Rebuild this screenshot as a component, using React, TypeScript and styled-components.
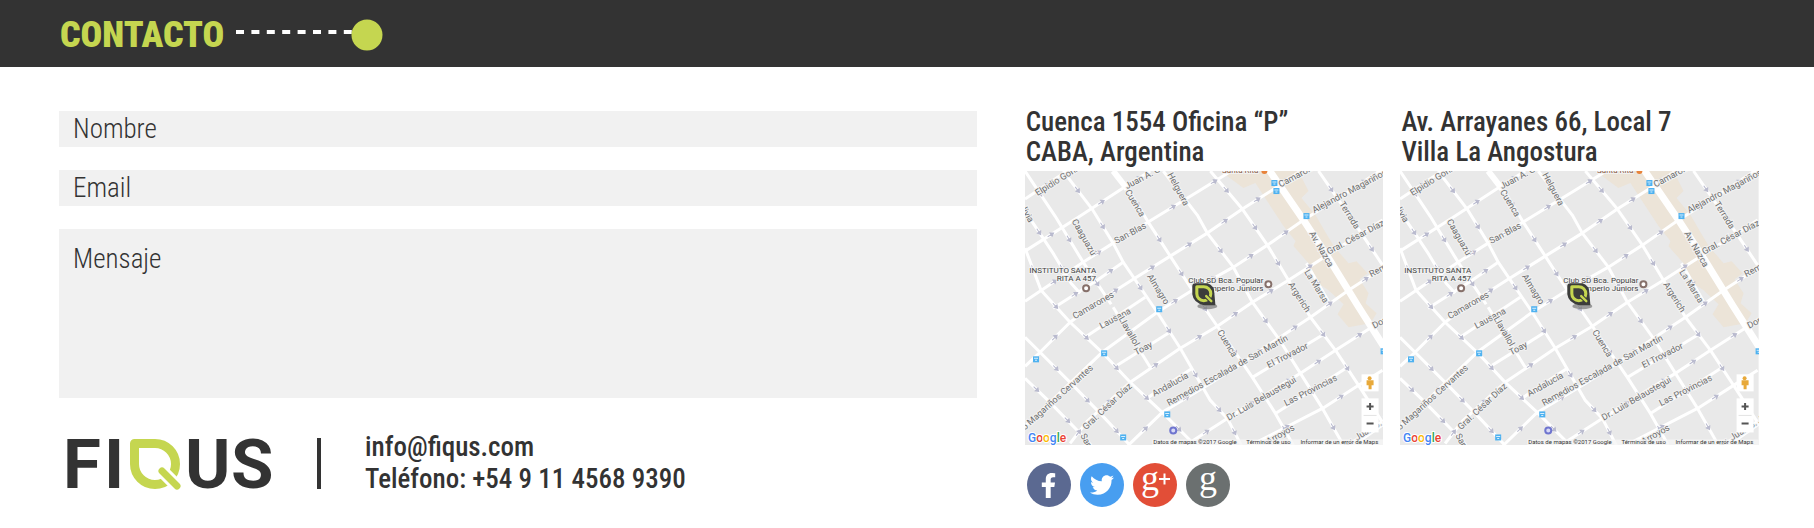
import React from 'react';
import styled, { createGlobalStyle } from 'styled-components';
import { FaFacebookF, FaTwitter } from 'react-icons/fa';

const ink = '#333333';
const lime = '#c5d650';
const field = '#f1f1f1';

const GlobalStyle = createGlobalStyle`
  *, *::before, *::after { box-sizing: border-box; }
  body {
    margin: 0;
    background: #fff;
    color: ${ink};
    font-family: 'Roboto Condensed', Roboto, sans-serif;
  }
`;

const Header = styled.header`
  display: flex;
  align-items: center;
  gap: 12px;
  height: 67px;
  padding: 2px 60px 0;
  background: ${ink};
`;

const Title = styled.h1`
  margin: 0;
  color: ${lime};
  font-size: 36px;
  font-weight: 900;
  line-height: 40px;
`;

const Trail = styled.svg`
  display: block;
  width: 148px;
  height: 32px;
`;

const Main = styled.main`
  display: grid;
  grid-template-columns: minmax(0, 5fr) minmax(0, 4fr);
  column-gap: 48px;
  padding: 40px 55px 20px 59px;
`;

const Form = styled.form`
  display: flex;
  flex-direction: column;
  gap: 23px;
  padding-top: 4px;
`;

const Input = styled.input`
  display: block;
  width: 100%;
  height: 36px;
  padding: 0 14px;
  border: 0;
  border-radius: 0;
  background: ${field};
  color: ${ink};
  font: 300 27px/32px 'Roboto Condensed', Roboto, sans-serif;
  &::placeholder { color: ${ink}; opacity: 1; }
`;

const Message = styled(Input).attrs({ as: 'textarea' })`
  height: 169px;
  padding: 14px;
  resize: none;
`;

const Brand = styled.div`
  display: flex;
  align-items: center;
  padding: 32px 0 0 6px;
`;

const Logo = styled.svg`
  display: block;
  width: 210px;
  height: 66px;
`;

const Divider = styled.span`
  width: 4px;
  height: 51px;
  margin: 0 44px 0 42px;
  background: ${ink};
`;

const Details = styled.address`
  font-size: 27px;
  font-style: normal;
  font-weight: 500;
  line-height: 32px;
`;

const PlainLink = styled.a`
  color: inherit;
  text-decoration: none;
`;

const Offices = styled.div`
  display: grid;
  grid-template-columns: repeat(2, minmax(0, 1fr));
  column-gap: 17px;
`;

const OfficeAddress = styled.address`
  padding: 0 0 4px 1px;
  font-size: 27px;
  font-style: normal;
  font-weight: 500;
  line-height: 30px;
  white-space: nowrap;
`;

const MapSvg = styled.svg`
  display: block;
  width: 100%;
  height: auto;
`;

const Social = styled.nav`
  display: flex;
  gap: 9px;
  padding: 18px 0 0 2px;
`;

const SocialLink = styled.a<{ $tone: string }>`
  display: flex;
  align-items: center;
  justify-content: center;
  width: 44px;
  height: 44px;
  border-radius: 50%;
  background: ${p => p.$tone};
  color: #fff;
`;

type Pt = [number, number];

const streets: Pt[][] = [
  [[0, 28], [42, 0]],
  [[0, 80], [52, 47], [101, 15], [125, 0]],
  [[0, 130], [58, 91], [88, 72], [123, 51], [172, 21], [206, 0]],
  [[28, 137], [72, 109], [98, 91]],
  [[0, 195], [15, 181], [45, 151], [72, 131], [108, 108], [145, 85], [182, 62], [217, 38], [247, 19], [275, 0]],
  [[60, 166], [120, 126]],
  [[0, 255], [77, 181], [132, 141], [167, 119], [208, 96], [242, 74], [278, 49], [318, 24], [357, -2]],
  [[45, 272], [62, 250], [105, 211], [155, 177], [192, 155], [227, 131], [263, 109], [305, 82], [357, 49]],
  [[92, 194], [143, 162]],
  [[103, 274], [137, 241], [185, 212], [215, 193], [253, 167], [285, 146], [323, 119], [357, 97]],
  [[123, 226], [167, 197]],
  [[227, 206], [300, 162]],
  [[160, 274], [202, 247], [250, 217], [275, 202], [310, 179], [357, 149]],
  [[250, 242], [322, 196]],
  [[225, 274], [297, 237], [333, 214], [357, 199]],
  [[0, 166], [15, 181], [47, 213], [77, 244], [105, 274]],
  [[0, 207], [23, 229], [62, 269], [66, 274]],
  [[0, 77], [16, 119], [45, 151], [77, 181], [105, 211], [137, 241], [170, 274]],
  [[0, 40], [28, 82], [46, 112], [55, 122]],
  [[0, 0], [30, 45], [58, 91], [86, 133]],
  [[38, 0], [67, 38], [88, 72], [98, 91], [132, 141], [155, 177], [185, 229], [202, 247], [216, 274]],
  [[88, 0], [101, 15], [123, 51], [145, 85], [167, 119], [192, 155], [227, 206], [250, 242], [268, 274]],
  [[138, 0], [172, 44], [182, 62], [208, 96], [227, 131], [253, 167], [275, 202], [297, 237], [318, 274]],
  [[185, 0], [217, 38], [242, 74], [263, 109], [285, 146], [310, 179], [333, 214], [357, 251]],
  [[293, 0], [318, 36], [335, 61], [357, 94]],
  [[281, 92], [304, 132]],
  [[88, 136], [125, 196]],
];

// One-way marks sit halfway along each block.
const arrows = streets.flatMap(line =>
  line.slice(1).flatMap((b, i) => {
    const a = line[i];
    const dx = b[0] - a[0];
    const dy = b[1] - a[1];
    if (Math.hypot(dx, dy) < 24) return [];
    return [{ x: (a[0] + b[0]) / 2, y: (a[1] + b[1]) / 2, r: (Math.atan2(dy, dx) * 180) / Math.PI }];
  }),
);

// Text, centre x, centre y, angle
const labels: [string, number, number, number][] = [
  ['Elpidio González', 39, 5, -32],
  ['Juan A. García', 126, 2, -28],
  ['Helguera', 153, 18, 62],
  ['Cuenca', 110, 32, 59],
  ['Caaguazú', 59, 66, 60],
  ['San Blas', 105, 62, -28],
  ['Almagro', 133, 118, 58],
  ['Camarones', 68, 134, -30],
  ['Lausana', 90, 147, -28],
  ['Llavallol', 104, 160, 60],
  ['Toay', 118, 177, -28],
  ['Andalucía', 145, 213, -29],
  ['Alejandro Magariños Cervantes', 20, 237, -42],
  ['Gral. César Díaz', 82, 235, -43],
  ['San Blas', 66, 278, 62],
  ['Remedios Escalada de San Martín', 202, 199, -29],
  ['El Trovador', 262, 184, -27],
  ['Dr. Luis Belaustegui', 236, 227, -30],
  ['Las Provincias', 285, 219, -27],
  ['Arroyos', 255, 263, -30],
  ['Av. Juan B. Justo', 347, 256, -32],
  ['Cuenca', 202, 172, 59],
  ['Camarones', 274, 3, -28],
  ['Alejandro Magariños', 324, 20, -28],
  ['Terrada', 324, 44, 58],
  ['Gral. César Díaz', 330, 66, -28],
  ['Av. Nazca', 296, 78, 60],
  ['La Marsa', 291, 115, 58],
  ['Argerich', 274, 126, 58],
  ['Remedios', 362, 94, -28],
  ['Donato', 360, 148, -28],
  ['Bolivia', 0, 39, 60],
];

const stops: Pt[] = [[249, 12], [251, 20], [281, 45], [134, 138], [11, 188], [79, 182], [142, 243], [98, 266], [358, 180]];

const Leaf = ({ gap }: { gap: string }) => (
  <g fill="none">
    <path d="M4.5 4.5H25A20.5 20.5 0 1 1 4.5 25Z" stroke={lime} strokeWidth="9" strokeLinejoin="round" />
    <path d="M32 32L52 52" stroke={gap} strokeWidth="13" />
    <path d="M32 32L47 47" stroke={lime} strokeWidth="7" strokeLinecap="round" />
  </g>
);

const AreaMap = ({ title }: { title: string }) => (
  <MapSvg viewBox="0 0 358 274" role="img" aria-label={title}>
    <rect width="358" height="274" fill="#e9e9e9" />
    <g fill="#ece4d8">
      <path d="M195 0H273L283 20L276 27L290 44L301 63L309 76L323 92L331 90L342 102L334 108L343 122L340 132L351 142L345 152L323 156L312 143L318 133L303 119L294 113L283 92L268 75L270 70L258 55L230 12L218 17Z" />
    </g>
    <g fill="none" stroke="#fff" strokeWidth="3" strokeLinejoin="round">
      {streets.map((line, i) => (
        <polyline key={i} points={line.map(p => p.join(',')).join(' ')} />
      ))}
      <path d="M88 0L102 18" strokeWidth="6" />
      <path d="M325 274L358 251" strokeWidth="6" />
      <path d="M243 -2L278 49L303 87L332 134L360 178" strokeWidth="7" />
    </g>
    <g stroke="#b9bace" strokeWidth="1" fill="#b9bace">
      {arrows.map((a, i) => (
        <path key={i} d="M-4 0H1M0 -2L3 0L0 2Z" transform={`translate(${a.x} ${a.y}) rotate(${a.r})`} />
      ))}
    </g>
    <g fontFamily="Roboto, sans-serif" fontSize="9" fill="#6e6e6e" stroke="#f2f2f2" strokeWidth="2" paintOrder="stroke" textAnchor="middle">
      {labels.map(([text, x, y, r], i) => (
        <text key={i} transform={`translate(${x} ${y}) rotate(${r})`} dy="3">{text}</text>
      ))}
    </g>
    <g fill="#4db1f0">
      {stops.map(([x, y], i) => (
        <g key={i}>
          <rect x={x - 3} y={y - 3} width="6" height="6" />
          <path d={`M${x - 2} ${y - 1}h4M${x - 1} ${y + 1}h2`} stroke="#d9effc" strokeWidth="1" />
        </g>
      ))}
    </g>
    <g fontFamily="Roboto, sans-serif" fontSize="8" fill="#444" stroke="#f2f2f2" strokeWidth="2" paintOrder="stroke" textAnchor="end">
      <text x="71" y="102">INSTITUTO SANTA</text>
      <text x="71" y="110">RITA A 457</text>
      <text x="238" y="112">Club SD Bca. Popular</text>
      <text x="238" y="120">Imperio Juniors</text>
      <text x="233" y="2" fill="#8a5a44">Santa Rita</text>
    </g>
    <circle cx="239" cy="0" r="3" fill="#e8833a" />
    <circle cx="61" cy="117" r="3" fill="#fff" stroke="#86706a" strokeWidth="2" />
    <circle cx="243" cy="113" r="3" fill="#fff" stroke="#86706a" strokeWidth="2" />
    <circle cx="148" cy="259" r="3" fill="#d8daf6" stroke="#6f75cf" strokeWidth="2" />

    <ellipse cx="182" cy="135" rx="10" ry="3" fill="#777" opacity="0.7" />
    <path d="M170 113H182Q188 115 188 122L189 133H179Q169 131 168 123V115Q168 113 170 113Z" fill="#3c3d3b" stroke="#3c3d3b" strokeWidth="2" />
    <g transform="translate(170 114) scale(0.34)"><Leaf gap="#3c3d3b" /></g>

    <rect x="336" y="203" width="17" height="17" fill="#fff" />
    <g fill="#e8a93a">
      <circle cx="344" cy="207" r="2" />
      <path d="M341 209H348V214H346V218H343V214H341Z" />
    </g>
    <rect x="336" y="227" width="17" height="34" fill="#fff" />
    <path d="M338 244H351" stroke="#e3e3e3" />
    <path d="M341 235H348M344.5 231.5V238.500M341 252H348" stroke="#555" strokeWidth="2" />

    <rect x="127" y="268" width="231" height="6" fill="#f5f5f5" opacity="0.8" />
    <g fontFamily="Roboto, sans-serif" fontSize="6" fill="#333">
      <text x="128" y="273">Datos de mapas ©2017 Google</text>
      <text x="221" y="273">Términos de uso</text>
      <text x="275" y="273">Informar de un error de Maps</text>
    </g>
    <text x="3" y="271" fontFamily="Roboto, sans-serif" fontSize="12" fontWeight="500" stroke="#fff" strokeWidth="2" paintOrder="stroke">
      <tspan fill="#4285f4">G</tspan>
      <tspan fill="#ea4335">o</tspan>
      <tspan fill="#fbbc05">o</tspan>
      <tspan fill="#4285f4">g</tspan>
      <tspan fill="#34a853">l</tspan>
      <tspan fill="#ea4335">e</tspan>
    </text>
  </MapSvg>
);

const GLetter = ({ plus }: { plus?: boolean }) => (
  <svg width="44" height="44" viewBox="0 0 44 44" aria-hidden="true">
    <text x={plus ? 17 : 22} y="27" fill="#fff" textAnchor="middle" fontFamily="'Liberation Serif', serif" fontSize="36">g</text>
    {plus && <path d="M26 16H37M31.500 10.500V21.500" stroke="#fff" strokeWidth="2" />}
  </svg>
);

export default function App() {
  return (
    <>
      <GlobalStyle />
      <Header>
        <Title>CONTACTO</Title>
        <Trail viewBox="0 0 148 32" aria-hidden="true">
          <path d="M0 13H120" stroke="#fff" strokeWidth="4" strokeDasharray="8 7.4" />
          <circle cx="131" cy="16" r="15.500" fill={lime} />
        </Trail>
      </Header>
      <Main>
        <section>
          <Form>
            <Input type="text" name="nombre" placeholder="Nombre" aria-label="Nombre" />
            <Input type="email" name="email" placeholder="Email" aria-label="Email" />
            <Message name="mensaje" placeholder="Mensaje" aria-label="Mensaje" />
          </Form>
          <Brand>
            <Logo viewBox="0 0 210 66" role="img" aria-label="Fiqus">
              <g fontFamily="Roboto, sans-serif" fontSize="69" fontWeight="700" fill={ink}>
                <text x="-2" y="58">F</text>
                <text x="39" y="58">I</text>
                <text x="120" y="58">U</text>
                <text x="166" y="58">S</text>
              </g>
              <g transform="translate(65 9)"><Leaf gap="#fff" /></g>
            </Logo>
            <Divider />
            <Details>
              <PlainLink href="mailto:info@fiqus.com">info@fiqus.com</PlainLink>
              <br />
              Teléfono: +54 9 11 4568 9390
            </Details>
          </Brand>
        </section>
        <section>
          <Offices>
            <div>
              <OfficeAddress>Cuenca 1554 Oficina “P”<br />CABA, Argentina</OfficeAddress>
              <AreaMap title="Cuenca 1554, CABA" />
            </div>
            <div>
              <OfficeAddress>Av. Arrayanes 66, Local 7<br />Villa La Angostura</OfficeAddress>
              <AreaMap title="Av. Arrayanes 66, Villa La Angostura" />
            </div>
          </Offices>
          <Social>
            <SocialLink href="#facebook" aria-label="Facebook" $tone="#5b6991"><FaFacebookF size={25} /></SocialLink>
            <SocialLink href="#twitter" aria-label="Twitter" $tone="#489ef0"><FaTwitter size={24} /></SocialLink>
            <SocialLink href="#googleplus" aria-label="Google+" $tone="#e24e37"><GLetter plus /></SocialLink>
            <SocialLink href="#google" aria-label="Google" $tone="#6b7070"><GLetter /></SocialLink>
          </Social>
        </section>
      </Main>
    </>
  );
}
